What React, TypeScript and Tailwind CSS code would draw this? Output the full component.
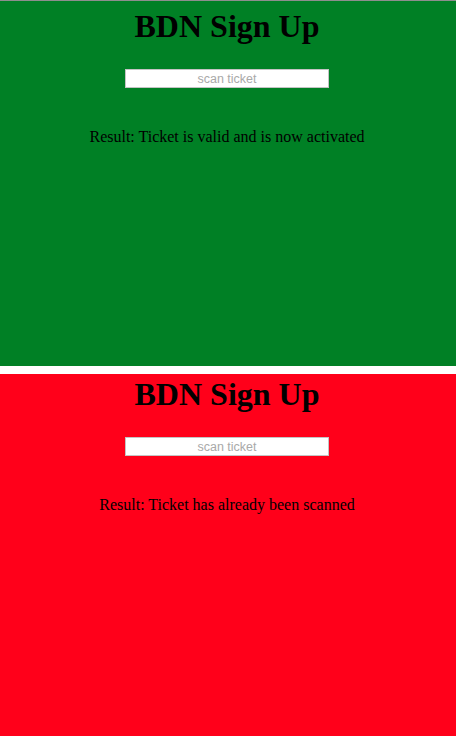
const serif = { fontFamily: '"Liberation Serif", "Times New Roman", serif' };

type PanelProps = {
  tone: "valid" | "scanned";
  result: string;
};

const Panel: React.FC<PanelProps> = ({ tone, result }) => {
  const bg =
    tone === "valid"
      ? "bg-[#008025] h-[365px] pt-[7px]"
      : "bg-[#ff001a] h-[362px] pt-[2px]";

  return (
    <section className={`flex flex-col items-center pr-[2px] text-black ${bg}`}>
      <h1
        className="text-[32px] leading-[37px] font-bold m-0"
        style={serif}
      >
        BDN Sign Up
      </h1>
      <input
        type="text"
        placeholder="scan ticket"
        className="mt-6 w-[204px] h-[19px] bg-white border border-[#c4c4c4] text-center text-[12.5px] leading-[17px] text-black placeholder:text-[#a9a9a9] outline-none"
        style={{ fontFamily: '"Liberation Sans", Arial, sans-serif' }}
      />
      <p className="mt-10 text-[16px] leading-[18px]" style={serif}>
        Result: {result}
      </p>
    </section>
  );
};

export default function App() {
  return (
    <div className="w-[456px] h-[736px] bg-white overflow-hidden">
      <div className="h-px bg-[#8e8e8e]" />
      <Panel tone="valid" result="Ticket is valid and is now activated" />
      <div className="h-[8px] bg-white" />
      <Panel tone="scanned" result="Ticket has already been scanned" />
    </div>
  );
}
